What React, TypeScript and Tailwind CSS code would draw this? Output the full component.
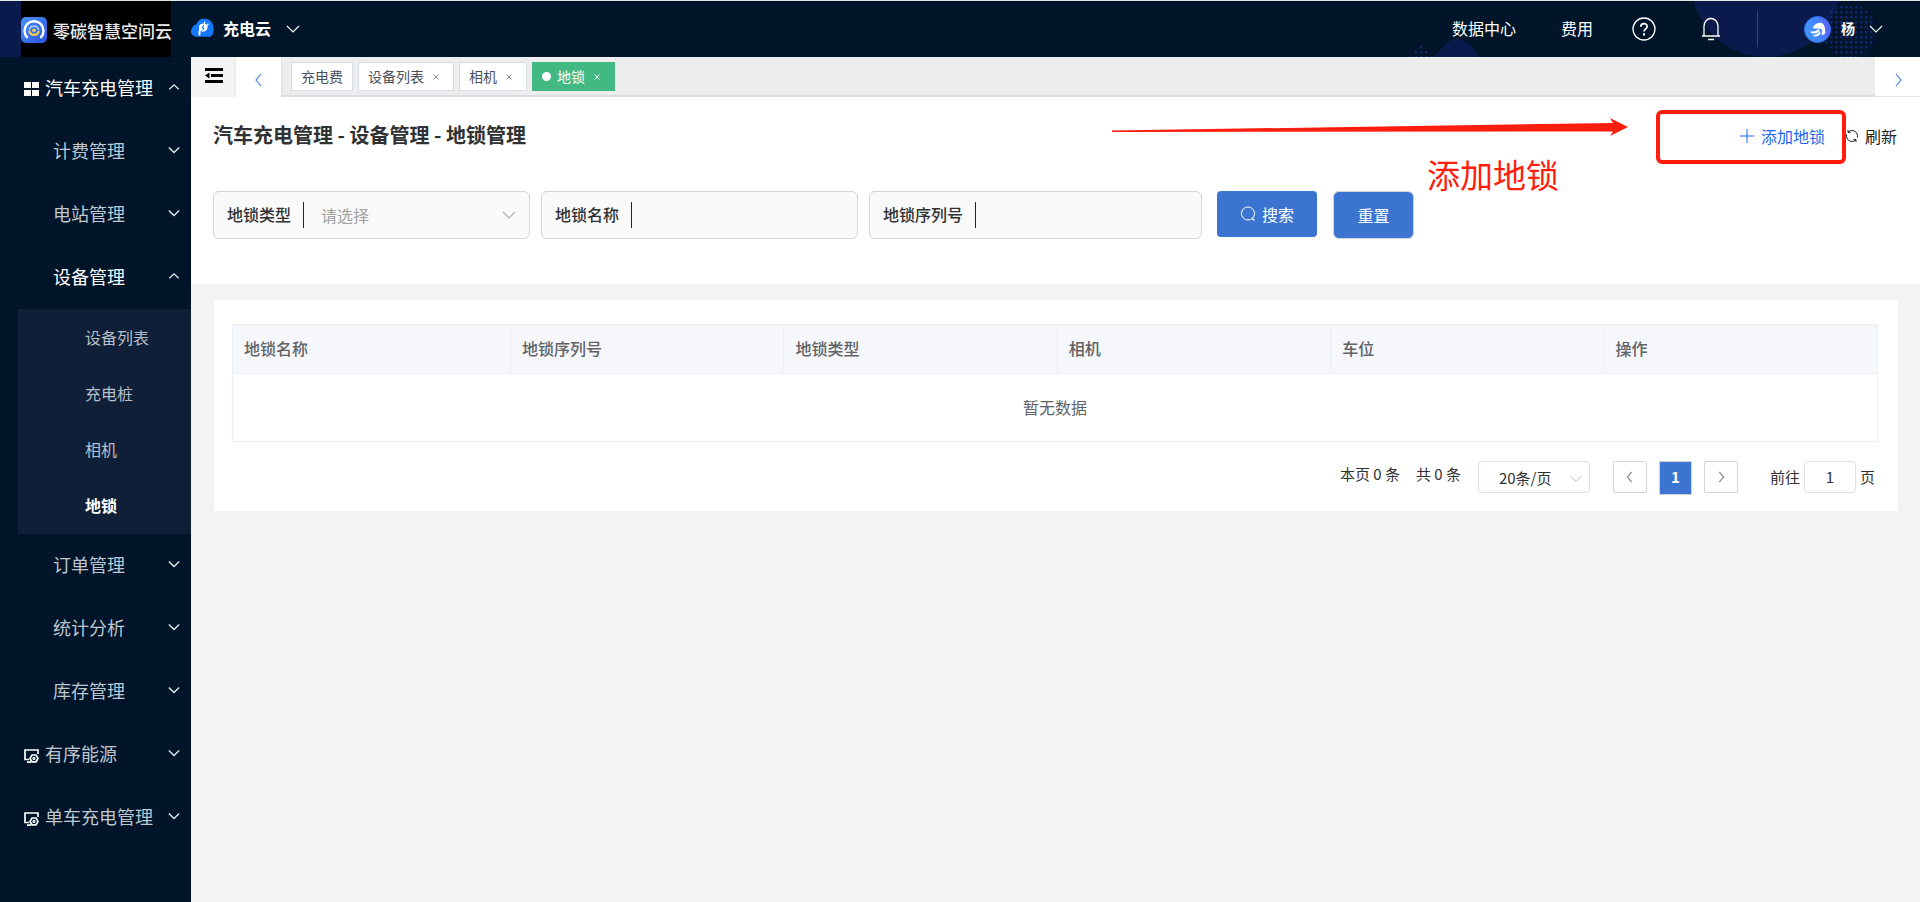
import { useState } from 'react';
import type { ReactNode } from 'react';
import clsx from 'clsx';

type MenuItem = {
  label: string;
  icon?: 'grid' | 'monitor';
  open?: boolean;
  children?: string[];
};

const menu: MenuItem[] = [
  { label: '汽车充电管理', icon: 'grid', open: true },
  { label: '计费管理' },
  { label: '电站管理' },
  { label: '设备管理', open: true, children: ['设备列表', '充电桩', '相机', '地锁'] },
  { label: '订单管理' },
  { label: '统计分析' },
  { label: '库存管理' },
  { label: '有序能源', icon: 'monitor' },
  { label: '单车充电管理', icon: 'monitor' },
];

const tabs = ['充电费', '设备列表', '相机', '地锁'];
const columns = ['地锁名称', '地锁序列号', '地锁类型', '相机', '车位', '操作'];

type Direction = 'up' | 'down' | 'left' | 'right';

const chevrons: Record<Direction, string> = {
  up: 'M1.5 9.500L7 4.500l5.500 5',
  down: 'M1 4l6 6 6-6',
  left: 'M9 1L4 7l5 6',
  right: 'M5 1l5 6-5 6',
};

function Chevron({ dir, bold, className }: { dir: Direction; bold?: boolean; className?: string }) {
  return (
    <svg
      viewBox="0 0 14 14"
      fill="none"
      stroke="currentColor"
      strokeWidth={bold ? 1.6 : 1.1}
      className={clsx('shrink-0', className)}
      aria-hidden="true"
    >
      <path d={chevrons[dir]} />
    </svg>
  );
}

function GridIcon() {
  return (
    <svg viewBox="0 0 15 14" className="mt-[3px] h-[14px] w-[15px] shrink-0" fill="#fff" aria-hidden="true">
      <path d="M0 0h7v6H0zM8 0h7v6H8zM0 8h7v6H0zM8 8h7v6H8z" />
    </svg>
  );
}

function MonitorIcon() {
  return (
    <svg viewBox="0 0 15 14" className="mt-[5px] h-[14px] w-[15px] shrink-0" fill="none" stroke="#fff" aria-hidden="true">
      <path d="M5 10.500H1V1h13v4M3 13.200h4" strokeWidth="1.7" />
      <path d="M8 6h4l2 3.400-2 3.400H8L6 9.400z" strokeWidth="1.7" />
      <circle cx="10" cy="9.400" r="1" strokeWidth="1.2" />
    </svg>
  );
}

function BrandLogo() {
  return (
    <svg viewBox="0 0 26 26" className="size-[26px] shrink-0" fill="none" aria-hidden="true">
      <defs>
        <linearGradient id="brand" x1="0" y1="0" x2="1" y2="1">
          <stop offset="0" stopColor="#4a93ff" />
          <stop offset="1" stopColor="#2b55dc" />
        </linearGradient>
      </defs>
      <rect width="26" height="26" rx="5" fill="url(#brand)" />
      <path d="M6 20.200a9.500 9.500 0 1 1 14 0" stroke="#fff" strokeWidth="2.4" strokeLinecap="round" />
      <path d="M8.300 13a4.800 4.800 0 0 1 9.400 0" stroke="#cfdfff" strokeWidth="1.3" />
      <path d="M8.200 14a4.900 4.900 0 0 0 9.600 0" stroke="#f5cf4b" strokeWidth="2.2" />
      <circle cx="13" cy="13.200" r="1.8" fill="#f5cf4b" />
    </svg>
  );
}

function CloudLogo() {
  return (
    <svg viewBox="0 0 24 20" className="h-5 w-6 shrink-0" aria-hidden="true">
      <path
        d="M5 18.800A5.200 5.200 0 0 1 1 10.500 5 5 0 0 1 5.500 6.500C6.500 2.500 10 .5 14 .8c5 .3 8.300 3.500 8.300 8 1.200 5-.8 10-4.300 10z"
        fill="#1677ff"
      />
      <path d="M8.500 17.500c-.4-3 0-5.500 1.500-7.500" stroke="#fff" strokeWidth="1.8" fill="none" />
      <path
        d="M8.200 11c-1-3.500 1-5.500 4.300-5.200l.8-2.300 1.200.5-.5 2 1.600.8 1.400-1.500 1 .8-1.600 2c.8 3-1.800 6-5.200 5.600z"
        fill="#fff"
      />
      <path d="M12.800 7l-1.800 2.800h2l-1.400 2.600" stroke="#1677ff" fill="none" />
    </svg>
  );
}

function Avatar() {
  return (
    <svg viewBox="0 0 27 27" className="size-[27px] shrink-0" aria-hidden="true">
      <defs>
        <linearGradient id="avatar" x1="0" y1=".6" x2="1" y2=".4">
          <stop offset="0" stopColor="#3f97ff" />
          <stop offset=".55" stopColor="#4583ff" />
          <stop offset="1" stopColor="#5d5bf6" />
        </linearGradient>
      </defs>
      <circle cx="13.5" cy="13.5" r="13" fill="url(#avatar)" stroke="#2f73ea" />
      <path d="M8.500 11.800C10.500 8 15 6 18 7.200c2.800 1.200 3.300 5.300 3.200 10.300-1.200 1.400-2.700 1.600-4 1 1.600-2.800 1.300-5.300-1.200-5.800-2.600-.5-4.800.6-7.500-.9z" fill="#fff" />
      <path d="M6 15.500c3.500.4 6-.9 9.200-2.600 1 2.600-2.400 4.700-5.300 4.700-1.800 0-3.200-.8-3.900-2.100z" fill="#fff" />
      <path d="M8.500 19.400c3.500-.2 6-1.800 7.500-4.600 1.600 2.600-.8 5.600-4.200 5.700-1.400 0-2.500-.4-3.300-1.100z" fill="#fff" />
    </svg>
  );
}

function HeaderDecoration() {
  return (
    <svg viewBox="0 0 540 56" className="absolute right-0 bottom-0 h-14 w-[540px]" aria-hidden="true">
      <defs>
        <pattern id="dots" width="5" height="5" patternUnits="userSpaceOnUse">
          <rect width="2.500" height="2.500" fill="#14236b" />
        </pattern>
      </defs>
      <circle cx="386" cy="-19" r="75" fill="#0a1a4c" />
      <path d="M52 56c8-3 13-18 24-18 12 0 18 10 23 18z" fill="#0a1a4c" />
      <path d="M30 56l12-14 12 14z" fill="url(#dots)" />
      <circle cx="469" cy="30" r="27" fill="url(#dots)" />
    </svg>
  );
}

function Header() {
  return (
    <header className="relative flex h-[57px] shrink-0 items-stretch border-t border-[#dfe6e4] bg-[#001529] text-white">
      <HeaderDecoration />
      <div className="w-[21px] bg-[#0a1a4c]" />
      <a href="#home" className="flex w-[150px] items-center gap-[6px] bg-black pt-[2px] text-[17px] font-medium whitespace-nowrap text-[#ececec]">
        <BrandLogo />
        <span className="pt-[2px]">零碳智慧空间云</span>
      </a>
      <button type="button" className="ml-5 flex items-center pb-[2px] text-base font-bold">
        <CloudLogo />
        <span className="ml-2">充电云</span>
        <Chevron dir="down" className="mt-[2px] ml-[15px] size-[14px]" />
      </button>
      <nav className="relative ml-auto flex items-center pr-[37px] text-base">
        <a href="#data" className="pb-[2px]">数据中心</a>
        <a href="#fee" className="ml-[45px] pb-[2px]">费用</a>
        <button type="button" aria-label="帮助" className="ml-[39px]">
          <svg viewBox="0 0 24 24" className="size-6" fill="none" stroke="#fff" aria-hidden="true">
            <circle cx="12" cy="12" r="11" strokeWidth="1.300" />
            <path d="M8.800 9.700c0-4 6.400-4 6.400-.2 0 2.300-3.200 2.500-3.200 5" strokeWidth="1.800" />
            <path d="M12 16.200v2.200" strokeWidth="2" />
          </svg>
        </button>
        <button type="button" aria-label="通知" className="ml-11">
          <svg viewBox="0 0 22 24" className="h-6 w-[22px]" fill="none" stroke="#fff" strokeWidth="1.300" aria-hidden="true">
            <path d="M2 19h18M4 19V9a7 7.500 0 0 1 14 0v10" />
            <path d="M8 22.500h6" strokeWidth="1.500" />
          </svg>
        </button>
        <span className="ml-[35px] h-9 w-px bg-[#3a4663]" />
        <button type="button" className="ml-[46px] flex items-center text-sm font-bold">
          <Avatar />
          <span className="ml-[10px] pb-[2px]">杨</span>
          <Chevron dir="down" className="ml-[14px] size-[14px]" />
        </button>
      </nav>
    </header>
  );
}

function Sidebar() {
  return (
    <aside className="w-[191px] shrink-0 bg-[#001529]">
      <ul>
        {menu.map((item) => (
          <li key={item.label}>
            <button
              type="button"
              aria-expanded={!!item.open}
              className={clsx(
                'flex h-[63px] w-full items-center pr-[11px] pb-[3px] text-lg',
                item.icon ? 'gap-[6px] pl-6' : 'pl-[53px]',
                item.open ? 'text-white' : 'text-[#bfc7d1]'
              )}
            >
              {item.icon === 'grid' && <GridIcon />}
              {item.icon === 'monitor' && <MonitorIcon />}
              {item.label}
              <Chevron dir={item.open ? 'up' : 'down'} bold className="ml-auto size-3 text-[#e4e8ec]" />
            </button>
            {item.children && (
              <ul className="ml-[18px] bg-[#0f1f38] pb-px">
                {item.children.map((child) => (
                  <li key={child}>
                    <a
                      href={`#${child}`}
                      className={clsx(
                        'flex h-14 items-center pl-[67px] text-base',
                        child === '地锁' ? 'font-bold text-white' : 'text-[#b7bfca]'
                      )}
                    >
                      {child}
                    </a>
                  </li>
                ))}
              </ul>
            )}
          </li>
        ))}
      </ul>
    </aside>
  );
}

function TabBar({ active, onSelect }: { active: string; onSelect: (tab: string) => void }) {
  return (
    <div className="flex h-10 shrink-0 items-stretch bg-[#ededed]">
      <button type="button" aria-label="收起菜单" className="flex w-[45px] justify-center bg-[#f4f4f4] pt-[11px]">
        <svg viewBox="0 0 18 15" className="h-[15px] w-[18px]" fill="#000" aria-hidden="true">
          <path d="M0 0h18v3H0zM6 6h12v3H6zM0 12h18v3H0zM0 7.500L4.500 4.500v6z" />
        </svg>
      </button>
      <button type="button" aria-label="向左" className="flex w-[45px] items-center justify-center bg-white pt-[6px] text-[#3b74f0] shadow-sm">
        <Chevron dir="left" className="size-[14px]" />
      </button>
      <div className="flex flex-1 items-start gap-[5px] border-b-2 border-[#d8dce5] px-[10px] pt-[5px]">
        {tabs.map((tab) => (
          <div
            key={tab}
            className={clsx(
              'flex h-[29px] items-center border px-[9px] pb-px text-sm',
              tab === active ? 'border-[#42b983] bg-[#42b983] text-white' : 'border-[#d8dce5] bg-white text-[#495060]'
            )}
          >
            {tab === active && <span className="mt-px mr-[6px] size-[9px] rounded-full bg-white" />}
            <button type="button" onClick={() => onSelect(tab)}>
              {tab}
            </button>
            {tab !== '充电费' && (
              <button type="button" aria-label={`关闭${tab}`} className="mt-[2px] ml-1 flex size-4 items-center justify-center">
                <svg viewBox="0 0 6 6" className={clsx('size-[6px]', tab === active ? 'text-white' : 'text-[#8a8f99]')} stroke="currentColor" aria-hidden="true">
                  <path d="M.5.5l5 5M5.500.5l-5 5" />
                </svg>
              </button>
            )}
          </div>
        ))}
      </div>
      <button type="button" aria-label="向右" className="flex w-[45px] items-center justify-center border-b border-[#e4e4e4] bg-white pt-[6px] text-[#3b74f0]">
        <Chevron dir="right" className="size-[14px]" />
      </button>
    </div>
  );
}

function Field({ id, label, className, children }: { id: string; label: string; className: string; children: ReactNode }) {
  return (
    <div className={clsx('relative flex h-12 items-center rounded-md border border-[#d4d4d4] bg-[#fafafa] pl-[13px]', className)}>
      <label htmlFor={id} className="pb-[3px] text-base font-medium whitespace-nowrap text-[#303133]">
        {label}
      </label>
      <span className="ml-3 h-[26px] w-px shrink-0 bg-[#222]" />
      {children}
    </div>
  );
}

function Annotations() {
  return (
    <div className="pointer-events-none absolute inset-0">
      <svg viewBox="0 0 516 18" className="absolute top-[21px] right-[292px] h-[18px] w-[516px]" fill="#ff1d0d" aria-hidden="true">
        <path d="M0 12.500L501 5l-3-5 18 9-18 9 3-4.500L0 14z" />
      </svg>
      <span className="absolute top-[57px] right-[361px] text-[33px] leading-10 text-[#ff1d0d]">添加地锁</span>
      <div className="absolute top-[13px] right-[74px] h-[54px] w-[190px] rounded-md border-4 border-[#ff1d0d]" />
    </div>
  );
}

function SearchPanel() {
  return (
    <section className="relative bg-white pt-5 pr-[23px] pb-[45px] pl-[22px]">
      <div className="flex h-9 items-center justify-between">
        <h1 className="text-xl font-bold text-[#303133]">汽车充电管理 - 设备管理 - 地锁管理</h1>
        <div className="flex items-center gap-5 pt-px text-base">
          <button type="button" className="flex items-center gap-[7px] text-[#1a66f0]">
            <svg viewBox="0 0 14 14" className="size-[14px]" stroke="currentColor" aria-hidden="true">
              <path d="M7 0v14M0 7h14" />
            </svg>
            添加地锁
          </button>
          <button type="button" className="flex items-center gap-[6px] text-[#222]">
            <svg viewBox="0 0 14 14" className="size-[14px]" fill="none" stroke="currentColor" aria-hidden="true">
              <path d="M12.500 8.500V6.500A5.500 5.500 0 0 0 3 3.200M1.500 5.500v2A5.500 5.500 0 0 0 11 10.800" />
              <path d="M3 .8v2.600h2.600M11 13.200v-2.600H8.400" />
            </svg>
            刷新
          </button>
        </div>
      </div>
      <form className="mt-[38px] flex gap-[11px]" onSubmit={(event) => event.preventDefault()}>
        <Field id="lock-type" label="地锁类型" className="w-[317px]">
          <select id="lock-type" className="h-full min-w-0 flex-1 appearance-none bg-transparent pl-[17px] text-base text-[#a0a0a0] outline-none">
            <option>请选择</option>
          </select>
          <Chevron dir="down" className="pointer-events-none absolute right-[13px] size-[14px] text-[#a8abb2]" />
        </Field>
        <Field id="lock-name" label="地锁名称" className="w-[317px]">
          <input id="lock-name" type="text" className="h-full min-w-0 flex-1 bg-transparent px-4 outline-none" />
        </Field>
        <Field id="lock-serial" label="地锁序列号" className="w-[333px]">
          <input id="lock-serial" type="text" className="h-full min-w-0 flex-1 bg-transparent px-4 outline-none" />
        </Field>
        <button type="submit" className="ml-1 flex h-[46px] w-[100px] items-center justify-center gap-[6px] rounded bg-[#3b75d1] text-base text-white">
          <svg viewBox="0 0 16 16" className="size-4" fill="none" stroke="#fff" aria-hidden="true">
            <circle cx="8" cy="7.500" r="6.500" />
            <path d="M11.800 12l2.700 2.500" strokeWidth="1.200" />
          </svg>
          搜索
        </button>
        <button type="reset" className="ml-[5px] h-12 w-[81px] rounded-md border border-[#d4d4d4] bg-[#3b75d1] text-base text-white">
          重置
        </button>
      </form>
      <Annotations />
    </section>
  );
}

function Pagination() {
  return (
    <div className="mt-[19px] flex items-start justify-end pr-[3px] text-[15px] leading-8 text-[#303133]">
      <span className="-mt-[3px]">本页 0 条</span>
      <span className="-mt-[3px] ml-4">共 0 条</span>
      <div className="relative ml-[17px]">
        <select aria-label="每页条数" className="h-8 w-28 appearance-none rounded border border-[#dcdfe6] bg-white pb-[2px] pl-5 text-[15px] outline-none">
          <option>20条/页</option>
        </select>
        <Chevron dir="down" className="pointer-events-none absolute top-[12px] right-2 size-3 text-[#b4b8c0]" />
      </div>
      <button type="button" aria-label="上一页" className="ml-[23px] flex h-8 w-[34px] items-center justify-center rounded-xs border border-[#d4d4d4] pb-px text-[#909399]">
        <Chevron dir="left" bold className="size-3" />
      </button>
      <button type="button" className="ml-3 h-[34px] w-[33px] border border-[#d4d4d4] bg-[#3b75d1] pb-[2px] leading-7 font-bold text-white">1</button>
      <button type="button" aria-label="下一页" className="ml-3 flex h-8 w-[34px] items-center justify-center rounded-xs border border-[#d4d4d4] pb-px text-[#909399]">
        <Chevron dir="right" bold className="size-3" />
      </button>
      <label htmlFor="page" className="ml-8">前往</label>
      <input id="page" type="text" defaultValue="1" className="mx-1 h-8 w-[52px] rounded border border-[#dcdfe6] text-center outline-none" />
      <span>页</span>
    </div>
  );
}

function LockTable() {
  return (
    <section className="mt-4 mr-[22px] ml-[23px] bg-white pt-6 pr-5 pb-4 pl-[18px]">
      <table className="w-full table-fixed border-collapse text-base text-[#606266]">
        <thead>
          <tr className="h-[49px] bg-[#f5f7fb]">
            {columns.map((column, index) => (
              <th
                key={column}
                className={clsx('border border-[#ebeef5] px-[11px] pb-[3px] text-left font-medium', index === 0 && 'w-[278px]')}
              >
                {column}
              </th>
            ))}
          </tr>
        </thead>
        <tbody>
          <tr className="h-[68px]">
            <td colSpan={columns.length} className="border border-[#ebeef5] pb-[2px] text-center">
              暂无数据
            </td>
          </tr>
        </tbody>
      </table>
      <Pagination />
    </section>
  );
}

export default function App() {
  const [activeTab, setActiveTab] = useState('地锁');

  return (
    <div className="flex min-h-screen flex-col bg-[#f3f3f3] font-['Noto_Sans_CJK_SC',sans-serif]">
      <Header />
      <div className="flex flex-1 items-stretch">
        <Sidebar />
        <main className="flex min-w-0 flex-1 flex-col">
          <TabBar active={activeTab} onSelect={setActiveTab} />
          <SearchPanel />
          <LockTable />
        </main>
      </div>
    </div>
  );
}
